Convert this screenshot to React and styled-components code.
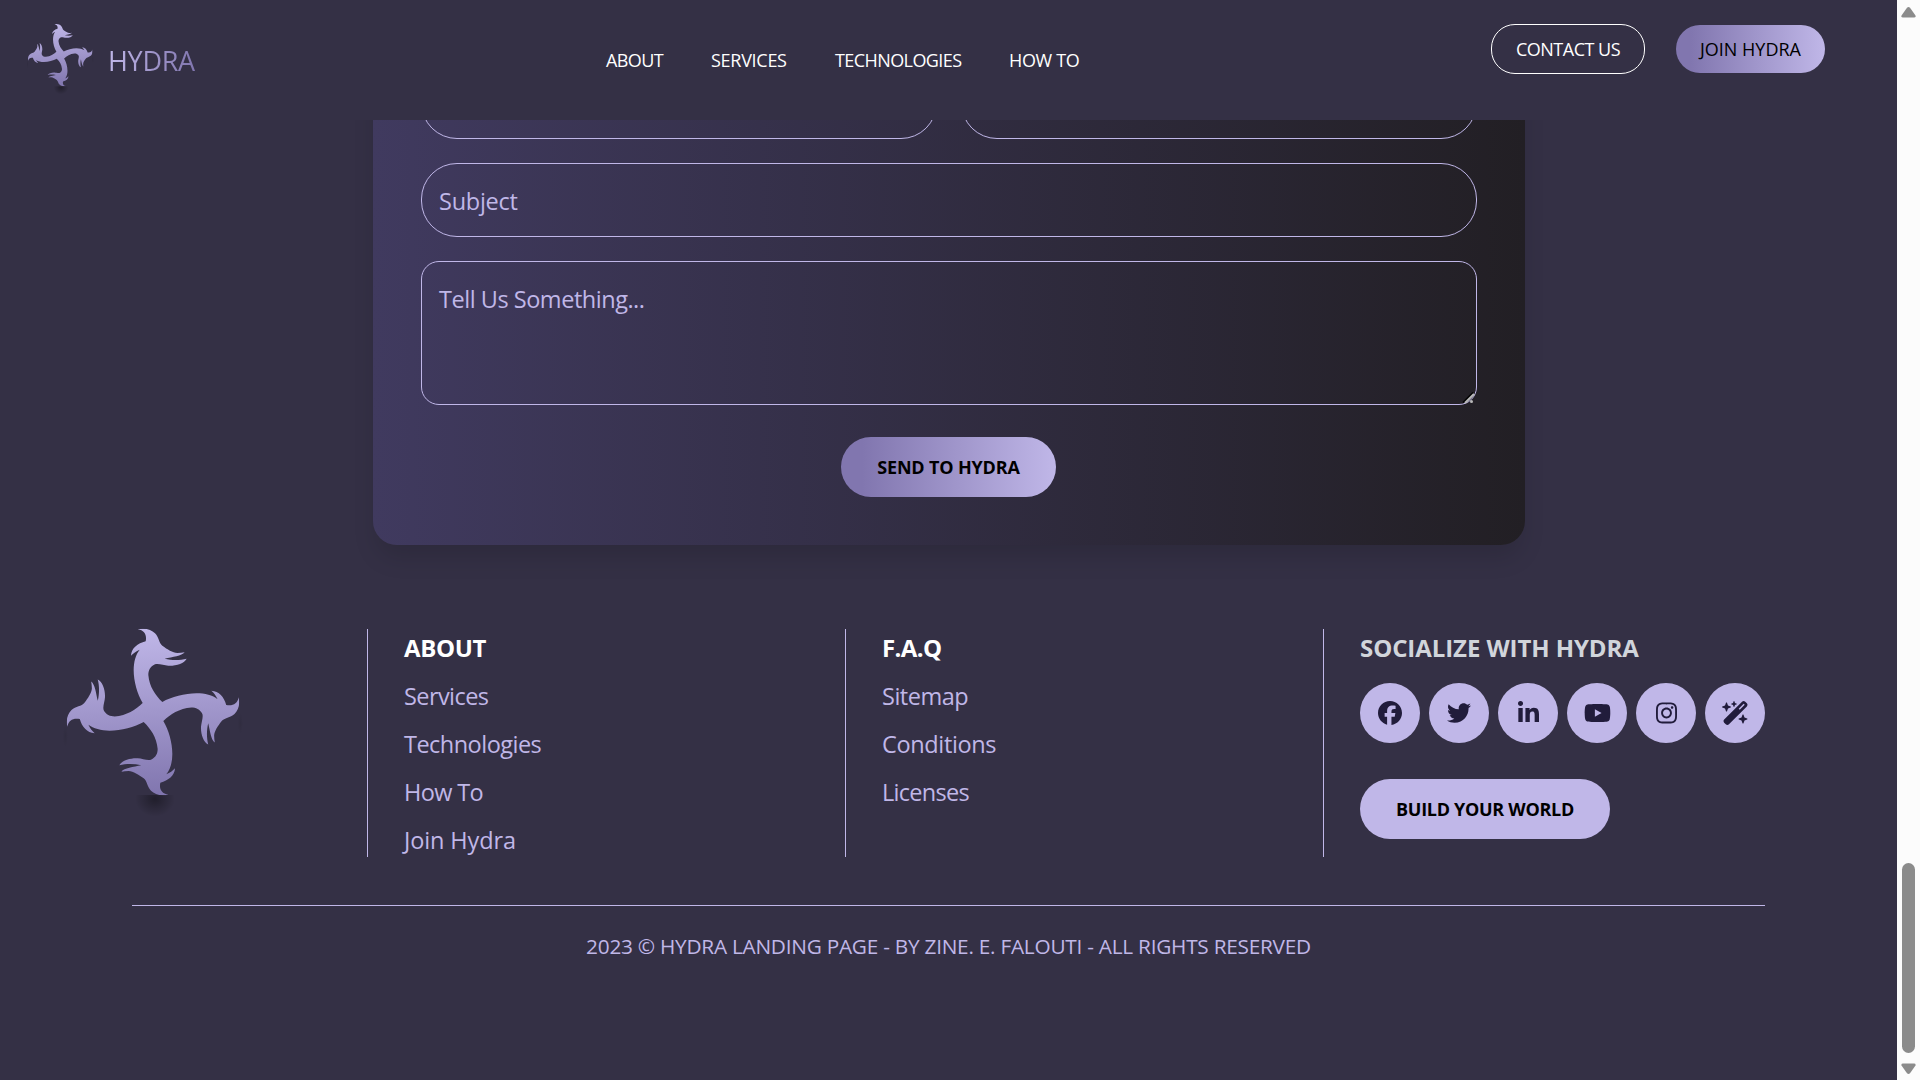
import React from "react";
import styled, { createGlobalStyle, css } from "styled-components";
import {
  FaFacebook,
  FaTwitter,
  FaLinkedinIn,
  FaYoutube,
  FaInstagram,
  FaWandMagicSparkles,
} from "react-icons/fa6";

const GlobalStyle = createGlobalStyle`
  *, *::before, *::after { box-sizing: border-box; margin: 0; padding: 0; }
  body {
    background: #343045;
    font-family: "Open Sans", "Noto Sans", sans-serif;
    font-size: 18px;
    overflow: hidden;
  }
  a { text-decoration: none; color: inherit; }
`;

const Window = styled.div`
  display: grid;
  grid-template-columns: 1fr 23px;
  height: 1080px;
  width: 1920px;
`;

const Page = styled.div`
  height: 1080px;
  overflow: hidden;
  background: #343045;
`;

const Header = styled.header`
  position: relative;
  z-index: 2;
  display: flex;
  height: 120px;
  background: #343045;
`;

const Brand = styled.a`
  display: flex;
  align-items: center;
  width: 606px;
  padding: 0 0 4px 18px;
`;

const BrandName = styled.span`
  margin: 5px 0 0 4px;
  font-size: 27px;
  font-weight: 400;
  letter-spacing: ${(p) => p.$ls}px;
  background: linear-gradient(90deg, #c0b7e8 0%, #8176af 100%);
  background-clip: text;
  -webkit-background-clip: text;
  color: transparent;
`;

const Nav = styled.nav`
  display: flex;
  align-items: center;
  gap: 48px;
  width: 885px;
  color: #fff;
`;

const NavLink = styled.a`
  white-space: nowrap;
  line-height: 24px;
  width: ${(p) => p.$w}px;
  letter-spacing: ${(p) => p.$ls}px;
`;

const Actions = styled.div`
  display: flex;
  align-items: center;
  align-self: flex-start;
  gap: 31px;
  padding-top: 24px;
`;

const pill = css`
  display: flex;
  align-items: center;
  justify-content: center;
  border: none;
  font-family: inherit;
  font-size: 18px;
  white-space: nowrap;
  letter-spacing: ${(p) => p.$ls}px;
`;

const OutlineButton = styled.button`
  ${pill}
  width: 154px;
  height: 50px;
  border: 1px solid #fff;
  border-radius: 24px;
  background: transparent;
  color: #fff;
`;

const JoinButton = styled.button`
  ${pill}
  width: 149px;
  height: 48px;
  border-radius: 24px;
  background: linear-gradient(90.57deg, #8176af 9.91%, #c0b7e8 100%);
  color: #000;
`;

const ContactSection = styled.section`
  display: flow-root;
  height: 509px;
`;

const FormCard = styled.form`
  display: flex;
  flex-direction: column;
  gap: 24px;
  width: 1152px;
  height: 528px;
  margin: -103px 0 0 373px;
  padding: 48px;
  border-radius: 24px;
  background: linear-gradient(90deg, #403a5f 0%, #221f24 100%);
  box-shadow: 0 16px 24px -4px rgba(0, 0, 0, 0.13);
`;

const FieldRow = styled.div`
  display: grid;
  grid-template-columns: 1fr 1fr;
  gap: 24px;
`;

const field = css`
  width: 100%;
  border: 1px solid #c0b7e8;
  background: transparent;
  color: #c0b7e8;
  font-family: inherit;
  font-size: 23.5px;
  letter-spacing: ${(p) => p.$ls || 0}px;
  outline: none;
  &::placeholder {
    color: #c0b7e8;
    opacity: 1;
  }
`;

const TextInput = styled.input`
  ${field}
  height: 74px;
  padding: 1px 17px 0;
  border-radius: 36px;
`;

const TextAreaWrap = styled.div`
  position: relative;
  flex: none;
  height: 144px;
`;

const TextArea = styled.textarea`
  ${field}
  display: block;
  height: 144px;
  padding: 21px 17px;
  border-radius: 18px;
  line-height: 32px;
  resize: none;
`;

const Grip = styled.svg`
  position: absolute;
  right: 1px;
  bottom: 1px;
  pointer-events: none;
`;

const SendButton = styled.button`
  ${pill}
  align-self: center;
  width: 215px;
  height: 60px;
  margin: 8px 1px 0 0;
  border-radius: 30px;
  background: linear-gradient(90.57deg, #8176af 9.91%, #c0b7e8 100%);
  color: #000;
  font-weight: 700;
`;

const Footer = styled.footer`
  display: flex;
  flex-direction: column;
`;

const FooterColumns = styled.div`
  display: grid;
  grid-template-columns: 367px 478px 478px 1fr;
  grid-template-rows: 228px;
`;

const FooterBrand = styled.div`
  padding-left: 40px;
  margin-top: -19px;
`;

const Column = styled.div`
  border-left: 1px solid #c0b7e8;
  padding-left: 36px;
`;

const ColumnTitle = styled.h2`
  font-size: 24px;
  line-height: 38px;
  font-weight: 700;
  white-space: nowrap;
  color: ${(p) => p.$color || "#fff"};
  letter-spacing: ${(p) => p.$ls}px;
`;

const LinkList = styled.ul`
  list-style: none;
`;

const LinkItem = styled.li`
  margin-top: 10px;
  font-size: 23.5px;
  line-height: 38px;
  color: #c0b7e8;
  letter-spacing: ${(p) => p.$ls}px;
`;

const SocialRow = styled.div`
  display: flex;
  gap: 9px;
  margin-top: 16px;
`;

const SocialButton = styled.a`
  display: flex;
  align-items: center;
  justify-content: center;
  width: 60px;
  height: 60px;
  border-radius: 50%;
  background: #c0b7e8;
  color: #211c3b;
  svg {
    display: block;
    flex: none;
    width: ${(p) => p.$w}px;
    height: 24px;
  }
`;

const BuildButton = styled.button`
  ${pill}
  width: 250px;
  height: 60px;
  margin-top: 36px;
  border-radius: 30px;
  background: #c0b7e8;
  color: #000;
  font-weight: 700;
`;

const Divider = styled.hr`
  width: 1633px;
  margin: 48px 0 0 132px;
  border: none;
  border-top: 1px solid #c0b7e8;
`;

const Copyright = styled.p`
  margin-top: 26px;
  font-size: 20.8px;
  line-height: 28px;
  text-align: center;
  white-space: nowrap;
  color: #c0b7e8;
  letter-spacing: ${(p) => p.$ls}px;
`;

const Scrollbar = styled.aside`
  display: flex;
  flex-direction: column;
  align-items: center;
  background: #fcfcfc;
  padding: 7px 0 6px;
`;

const Thumb = styled.div`
  width: 13px;
  height: 190px;
  margin: auto 0 10px;
  border-radius: 7px;
  background: #8b8b8b;
`;

const ARM =
  "M293 58C318 53 334 60 345 70C357 82 357 100 367 107C382 118 398 128 412 129C420 129 427 128 434 127C425 138 398 141 374 146C395 151 420 151 440 146C433 160 408 168 385 167C370 166 356 160 345 163C330 170 325 182 325 195C328 230 346 256 367 276L372 312L339 326L306 312L310 282C293 256 281 215 281 180C281 156 287 133 299 119C288 124 280 129 273 137C274 115 293 100 317 94C321 76 314 61 293 58Z";

function HydraMark({ id, width }) {
  const quarter = "translate(339 306) scale(1.036 1) rotate(-90) scale(0.9653 1) translate(-339 -306)";
  const half = "rotate(180 339 306)";
  return (
    <svg width={width} height={(width * 660) / 690} viewBox="0 0 690 660" aria-hidden="true">
      <defs>
        <linearGradient id={`${id}-fill`} gradientUnits="userSpaceOnUse" x1="300" y1="57" x2="330" y2="555">
          <stop offset="0" stopColor="#c0b7e8" />
          <stop offset="1" stopColor="#8176af" />
        </linearGradient>
        <radialGradient id={`${id}-shade`}>
          <stop offset="0" stopColor="#000" stopOpacity="0.38" />
          <stop offset="0.5" stopColor="#000" stopOpacity="0.18" />
          <stop offset="1" stopColor="#000" stopOpacity="0" />
        </radialGradient>
        <clipPath id={`${id}-below`}>
          <rect x="0" y="555" width="690" height="105" />
        </clipPath>
        <clipPath id={`${id}-shape`}>
          <path d={ARM} />
          <path d={ARM} transform={quarter} />
          <path d={ARM} transform={half} />
          <path d={ARM} transform={`${half} ${quarter}`} />
        </clipPath>
      </defs>
      <ellipse cx="345" cy="566" rx="60" ry="54" fill={`url(#${id}-shade)`} clipPath={`url(#${id}-below)`} />
      <ellipse cx="76" cy="378" rx="8" ry="34" fill={`url(#${id}-shade)`} opacity="0.2" />
      <ellipse cx="601" cy="340" rx="8" ry="34" fill={`url(#${id}-shade)`} opacity="0.2" />
      <rect x="70" y="50" width="540" height="510" fill={`url(#${id}-fill)`} clipPath={`url(#${id}-shape)`} />
    </svg>
  );
}

const NAV = [
  { label: "ABOUT", w: 57, ls: -0.6 },
  { label: "SERVICES", w: 76, ls: -0.28 },
  { label: "TECHNOLOGIES", w: 126, ls: -0.58 },
  { label: "HOW TO", w: 70, ls: -0.35 },
];

const ABOUT_LINKS = [
  { label: "Services", ls: -0.58 },
  { label: "Technologies", ls: -0.52 },
  { label: "How To", ls: -0.62 },
  { label: "Join Hydra", ls: -0.12 },
];

const FAQ_LINKS = [
  { label: "Sitemap", ls: -0.5 },
  { label: "Conditions", ls: -0.35 },
  { label: "Licenses", ls: -0.72 },
];

const SOCIALS = [
  { Icon: FaFacebook, w: 24 },
  { Icon: FaTwitter, w: 24 },
  { Icon: FaLinkedinIn, w: 21 },
  { Icon: FaYoutube, w: 27 },
  { Icon: FaInstagram, w: 21 },
  { Icon: FaWandMagicSparkles, w: 27 },
];

function Links({ items }) {
  return (
    <LinkList>
      {items.map((l) => (
        <LinkItem key={l.label} $ls={l.ls}>
          <a href="#">{l.label}</a>
        </LinkItem>
      ))}
    </LinkList>
  );
}

export default function App() {
  return (
    <>
      <GlobalStyle />
      <Window>
        <Page>
          <Header>
            <Brand href="#">
              <HydraMark id="brand" width={86} />
              <BrandName $ls={-0.3}>HYDRA</BrandName>
            </Brand>
            <Nav>
              {NAV.map((n) => (
                <NavLink key={n.label} href="#" $w={n.w} $ls={n.ls}>
                  {n.label}
                </NavLink>
              ))}
            </Nav>
            <Actions>
              <OutlineButton $ls={-0.5}>CONTACT US</OutlineButton>
              <JoinButton $ls={0}>JOIN HYDRA</JoinButton>
            </Actions>
          </Header>

          <ContactSection>
            <FormCard>
              <FieldRow>
                <TextInput />
                <TextInput />
              </FieldRow>
              <TextInput placeholder="Subject" $ls={-0.26} />
              <TextAreaWrap>
                <TextArea placeholder="Tell Us Something..." $ls={-0.47} />
                <Grip width="14" height="14" viewBox="0 0 14 14">
                  <path d="M1 12.500L11 2.500" stroke="#000" strokeWidth="1.600" />
                  <path d="M3 13L12 4" stroke="#b9b9b9" strokeWidth="2.200" />
                  <circle cx="9.500" cy="11.500" r="1.500" fill="#b9b9b9" />
                </Grip>
              </TextAreaWrap>
              <SendButton type="button" $ls={-0.17}>SEND TO HYDRA</SendButton>
            </FormCard>
          </ContactSection>

          <Footer>
            <FooterColumns>
              <FooterBrand>
                <HydraMark id="footer" width={230} />
              </FooterBrand>
              <Column>
                <ColumnTitle $ls={-0.36}>ABOUT</ColumnTitle>
                <Links items={ABOUT_LINKS} />
              </Column>
              <Column>
                <ColumnTitle $ls={-0.6}>F.A.Q</ColumnTitle>
                <Links items={FAQ_LINKS} />
              </Column>
              <Column>
                <ColumnTitle $color="#d1d5db" $ls={-0.08}>SOCIALIZE WITH HYDRA</ColumnTitle>
                <SocialRow>
                  {SOCIALS.map(({ Icon, w }, i) => (
                    <SocialButton key={i} href="#" $w={w}>
                      <Icon />
                    </SocialButton>
                  ))}
                </SocialRow>
                <BuildButton $ls={-0.3}>BUILD YOUR WORLD</BuildButton>
              </Column>
            </FooterColumns>
            <Divider />
            <Copyright $ls={-0.25}>
              2023 © HYDRA LANDING PAGE - BY ZINE. E. FALOUTI - ALL RIGHTS RESERVED
            </Copyright>
          </Footer>
        </Page>
        <Scrollbar>
          <svg width="15" height="11" viewBox="0 0 15 11">
            <path d="M6 .8Q7.500-.8 9 .8L14.500 8.500Q15 10.500 13 10.500H2Q0 10.500.5 8.500Z" fill="#8b8b8b" />
          </svg>
          <Thumb />
          <svg width="15" height="11" viewBox="0 0 15 11">
            <path d="M6 10.200Q7.500 11.800 9 10.200L14.500 2.500Q15 .5 13 .5H2Q0 .5.5 2.500Z" fill="#8b8b8b" />
          </svg>
        </Scrollbar>
      </Window>
    </>
  );
}
